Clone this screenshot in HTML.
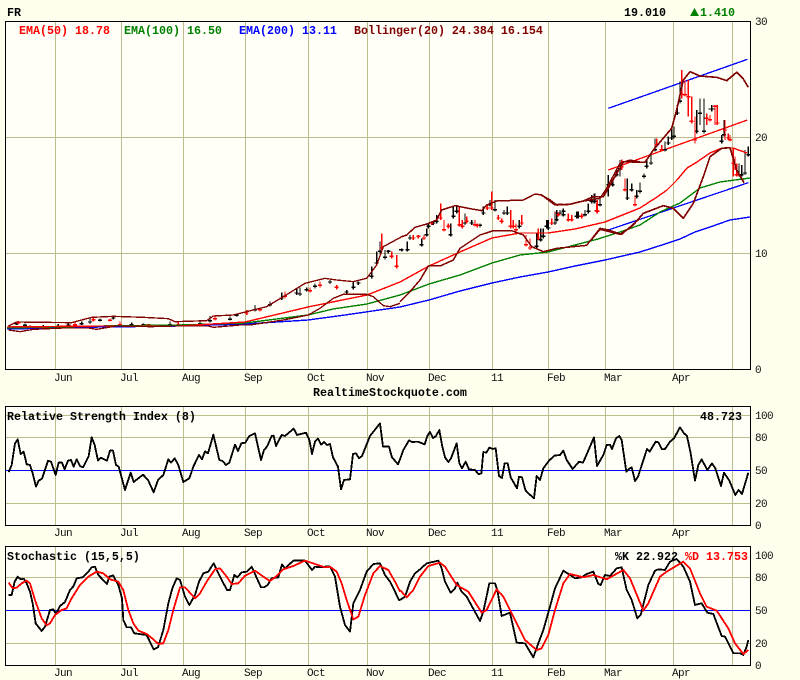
<!DOCTYPE html>
<html><head><meta charset="utf-8"><title>FR</title>
<style>
html,body{margin:0;padding:0;background:#ffffee;width:800px;height:680px;overflow:hidden}
svg{display:block}
text{font-family:"Liberation Mono",monospace;font-size:11px;letter-spacing:-.6px;fill:#111}
.b{font-weight:bold;font-size:11.67px;letter-spacing:0;fill:#000}
.l{fill:none;stroke-linejoin:round;shape-rendering:crispEdges}
</style></head><body>
<svg width="800" height="680" viewBox="0 0 800 680" xmlns="http://www.w3.org/2000/svg">
<rect width="800" height="680" fill="#ffffee"/>
<rect x="5.5" y="21.5" width="745" height="348" fill="#fffff8"/>
<rect x="5.5" y="406.5" width="745" height="119" fill="#fffff8"/>
<rect x="5.5" y="546.5" width="745" height="119" fill="#fffff8"/>
<g stroke="#bcbc8c" stroke-width="1" shape-rendering="crispEdges">
<path d="M55.500 21V369M121.500 21V369M183.500 21V369M245.500 21V369M308.500 21V369M367.500 21V369M429.500 21V369M492.500 21V369M548.500 21V369M605.500 21V369M673.500 21V369M732.500 21V369M5 137.500H750M5 253.500H750"/>
<path d="M55.500 406V525M121.500 406V525M183.500 406V525M245.500 406V525M308.500 406V525M367.500 406V525M429.500 406V525M492.500 406V525M548.500 406V525M605.500 406V525M673.500 406V525M732.500 406V525M5 415.500H750M5 437.500H750M5 503.500H750"/>
<path d="M55.500 546V665M121.500 546V665M183.500 546V665M245.500 546V665M308.500 546V665M367.500 546V665M429.500 546V665M492.500 546V665M548.500 546V665M605.500 546V665M673.500 546V665M732.500 546V665M5 577.500H750M5 643.500H750"/>
</g>

<!-- Trend channel -->
<g transform="translate(540 0) scale(.33333)" class="l" stroke-width="4">
<path d="M205 325L622 178M205 690L625 548" stroke="#0000ff"/>
<path d="M205 510L622 360" stroke="#ff0000"/>
</g>

<!-- Bars left -->
<g transform="translate(0 200) scale(.33333)" class="l" stroke-width="4">
<path stroke="#000" d="M30 378V385m-6-4h12M50 365V375m-6-4h12M75 370V380m-6-4h12M115 378V385m-6-4h12M130 375V385m-6-4h12M175 372V382m-6-4h12M205 370V380m-6-4h12M245 365V375m-6-4h12M270 352V372m-6-6h12M300 355V365m-6-4h12M340 350V358m-6-4h12M395 368V378m-6-4h12M430 370V378m-6-4h12M510 365V378m-6-4h12M600 365V375m-6-4h12M630 348V368m-6-6h12M690 350V362m-6-4h12M710 340V350m-6-4h12M765 315V335m-6-6h12M810 305V320m-6-6h12M845 278V300m-6-6h12M890 265V285m-6-6h12M900 262V288m-6-6h12M920 262V275m-6-6h12M945 250V265m-6-6h12M990 240V252m-6-6h12M1040 270V282m-6-6h12M1060 245V268m-6-6h12M1075 245V255m-6-6h12M1115 200V235m-6-6h12M1130 155V195m-6-6h12M1140 125V160m-6-6h12M1155 150V178m-6-6h12M1165 150V160m-6-6h12"/>
<path stroke="#f00" d="M55 363V372m-6-4h12M90 375V385m-6-4h12M150 378V385m-6-4h12M225 368V378m-6-4h12M280 350V365m-6-6h12M330 355V365m-6-4h12M360 365V378m-6-4h12M445 372V378m-6-4h12M535 365V378m-6-4h12M645 345V362m-6-6h12M740 330V345m-6-6h12M780 322V335m-6-6h12M855 275V295m-6-6h12M930 262V278m-6-6h12M960 245V262m-6-6h12M1010 255V268m-6-6h12M1145 100V150m-6-6h12M1175 155V175m-6-6h12M1190 165V205m-6-6h12"/>
</g>
<!-- Bars mid -->
<g transform="translate(400 140) scale(.33333)" class="l" stroke-width="4">
<path stroke="#000" d="M5 325V335m-8-6h14M22 305V335m-6-6h12M30 285V300m-6-6h12M65 295V320m-6-6h12M80 265V290m-6-6h12M85 250V265m-6-6h12M100 245V255m-6-6h12M110 225V250m-6-6h12M160 200V235m-6-6h12M170 195V220m-6-6h12M195 220V255m-6-6h12M152 250V290m-6-6h12M215 240V255m-6-6h12M240 250V262m-6-6h12M250 200V225m-6-6h12M270 180V200m-6-6h12M285 180V215m-6-6h12M312 210V225m-6-6h12M322 200V225m-6-6h12M358 240V265m-6-6h12M410 280V325m-6-6h12M422 265V305m-6-6h12M430 265V285m-6-6h12M440 240V265m-6-6h12M465 215V255m-6-6h12M480 210V225m-6-6h12M490 205V220m-6-6h12M530 215V235m-6-6h12M545 225V235m-6-6h12M555 210V230m-6-6h12M565 190V220m-6-6h12M575 165V190m-6-6h12M582 160V190m-6-6h12M600 170V200m-6-6h12"/>
<path stroke="#f00" d="M40 285V300m-6-6h12M55 285V295m-6-6h12M72 285V300m-6-6h12M95 245V255m-6-6h12M122 190V240m-6-6h12M132 240V275m-6-6h12M145 250V265m-6-6h12M178 198V260m-6-6h12M187 240V265m-6-6h12M200 230V250m-6-6h12M225 240V260m-6-6h12M232 250V262m-6-6h12M262 195V210m-6-6h12M275 155V210m-6-6h12M295 225V240m-6-6h12M305 235V250m-6-6h12M332 210V265m-6-6h12M340 240V265m-6-6h12M348 250V275m-6-6h12M365 225V255m-6-6h12M378 285V320m-6-6h12M390 295V330m-6-6h12M415 265V300m-6-6h12M455 235V255m-6-6h12M470 210V225m-6-6h12M505 220V245m-6-6h12M515 225V245m-6-6h12M590 190V218m-6-6h12"/>
</g>
<!-- Bars right -->
<g transform="translate(540 0) scale(.33333)" class="l" stroke-width="4">
<path stroke="#000" d="M10 685V715m-6-6h12M25 660V690m-6-6h12M50 630V665m-6-6h12M70 625V650m-6-6h12M115 635V655m-6-6h12M135 630V650m-6-6h12M145 612V640m-6-6h12M155 590V610m-6-6h12M165 580V610m-6-6h12M180 595V620m-6-6h12M205 525V590m-6-36h12M218 540V560m-6-6h12M230 505V530m-6-6h12M240 480V530m-6-24h12M262 535V600m-6-6h12M275 550V575m-6-6h12M290 570V595m-6-6h12M300 548V580m-6-6h12M312 520V535m-6-6h12M320 480V505m-6-6h12M333 460V495m-6-6h12M345 415V455m-6-6h12M375 425V455m-6-6h12M385 410V435m-6-6h12M395 385V420m-6-6h12M402 380V415m-6-6h12M412 315V345m-6-6h12M420 245V310m-6-6h12M470 330V400m-6-6h12M480 295V375m-6-35h12M492 295V400m-6-6h12M515 315V335m-9-8h18M545 405V430m-6-6h12M552 360V410m-6-6h12M597 490V530m-6-6h12M605 495V530m-6-6h12M615 450V525m-6-6h12M625 440V470m-6-6h12"/>
<path stroke="#f00" d="M35 660V675m-6-6h12M55 640V650m-6-6h12M85 645V665m-6-6h12M95 650V665m-6-6h12M125 640V655m-6-6h12M172 600V640m-6-6h12M245 478V510m-6-10h12M255 535V575m-6-6h12M285 590V620m-6-6h12M350 415V440m-6-6h12M365 435V455m-6-6h12M425 210V295m-6-12h12M435 240V290m-6-6h12M445 240V350m-6-60h12M455 290V370m-6-6h12M465 350V430m-6-10h12M500 340V375m-6-20h12M510 345V365m-6-6h12M525 315V375m-6-56h12M532 315V375m-6-6h12M555 360V420m-6-30h12M565 400V420m-6-6h12M570 405V425m-6-6h12M580 445V530m-6-40h12M585 470V510m-6-6h12M590 490V530m-6-6h12"/>
</g>

<!-- Main indicators -->
<g class="l" stroke-width="1.400">
<polyline stroke="#0000ff" points="7,329 100,327 180,326 245,324 308,320 345,315 400,307 429,300 460,291 492,283 520,277 548,272 575,266 605,260 640,252 665,244 680,239 695,232 710,227 730,220 750,217"/>
<polyline stroke="#008000" points="7,328 100,326 180,325 245,323 308,315 333,309 367,304 400,295 429,284 460,275 492,263 520,255 548,252 575,245 598,239 620,232 640,225 660,212 680,203 700,188 720,182 750,178"/>
<polyline stroke="#ff0000" points="7,327 100,326 180,326 245,322 308,307 367,295 400,282 429,266 460,252 492,238 520,233 548,233 575,229 605,222 640,208 657,197 667,190 677,180 687,168 697,162 710,153 722,148 733,148 747,153"/>
</g>
<g transform="translate(0 200) scale(.33333)" class="l" stroke="#800000" stroke-width="4">
<polyline points="25,378 50,366 215,368 275,352 340,349 430,352 505,356 525,365 620,362 640,348 700,345 800,320 850,290 915,250 975,235 1010,240 1060,245 1100,235 1130,195 1150,140 1200,113"/>
<polyline points="25,390 60,395 100,388 190,384 265,384 290,388 350,378 455,380 520,378 625,378 640,382 720,375 750,375 850,360 925,345 960,325 1000,295 1030,283 1100,283 1120,290 1150,317 1170,320 1200,310"/>
</g>
<g transform="translate(400 140) scale(.33333)" class="l" stroke="#800000" stroke-width="4.500">
<polyline points="0,292 20,285 45,262 80,252 110,240 125,210 165,197 205,205 245,212 260,195 290,183 370,180 405,162 425,165 465,195 480,192 500,195 540,185 570,180 600,175 620,145 660,70 690,60 720,66"/>
<polyline points="0,485 30,455 60,420 85,378 120,378 160,360 180,325 240,285 280,272 335,272 370,285 395,320 430,335 470,325 560,316 600,265 625,270 665,283 720,235"/>
</g>
<g transform="translate(540 0) scale(.33333)" class="l" stroke="#800000" stroke-width="5">
<polyline points="0,583 30,600 50,615 90,613 130,603 160,590 190,590 225,530 250,485 315,487 340,450 395,385 410,330 430,240 450,215 480,228 530,232 560,242 590,217 610,237 625,262"/>
<polyline points="155,718 180,688 240,703 275,680 310,640 370,617 400,625 430,655 460,610 490,530 510,470 545,445 570,443 590,510 612,548"/>
</g>

<!-- RSI -->
<path d="M5 470.500H750" stroke="#0000ff" stroke-width="1" shape-rendering="crispEdges"/>
<g transform="translate(0 350) scale(.33333)" class="l" stroke="#000" stroke-width="5.500">
<polyline points="26,366 35,345 45,280 53,268 62,312 71,305 80,343 90,345 98,370 108,410 116,392 126,386 144,332 153,335 167,375 176,338 186,338 194,358 204,332 213,330 221,350 230,328 240,348 249,352 266,318 275,262 284,285 294,332 303,323 321,332 330,302 339,302 348,345 356,350 375,420 392,368 401,396 429,374 444,390 461,427 474,390 490,375 505,328 513,338 524,325 535,345 550,396 568,385 580,350 597,315 606,328 615,304 624,310 640,254 658,330 668,333 678,345 688,338 705,284 714,303 724,280 736,278 748,258 765,250 783,330 792,300 801,290 815,258 821,257 828,288 845,255 855,258 881,236 891,255 918,248 928,270 936,312 945,275 954,266 963,284 972,276 981,285 990,282 999,322 1014,350 1023,418 1032,390 1050,388 1059,312 1068,310 1077,325 1086,318 1110,258 1140,220 1149,290 1167,290 1176,322 1194,343 1200,328"/>
</g>
<g transform="translate(400 350) scale(.33333)" class="l" stroke="#000" stroke-width="5.500">
<polyline points="0,328 10,300 27,271 36,276 54,275 74,283 82,258 90,246 99,264 108,258 118,240 126,285 135,322 145,336 153,325 170,280 178,340 186,355 197,335 207,358 225,360 236,373 244,370 250,306 259,308 268,293 279,297 287,295 297,378 306,384 314,340 323,340 332,382 351,415 357,380 366,382 376,420 385,430 402,445 410,378 420,390 430,355 447,332 463,317 480,315 490,302 500,330 518,357 537,335 549,338 558,318 582,262 591,348 610,315 620,285 630,284 636,297 648,265 658,258 665,270 679,365 688,356 695,352 705,393 714,380 741,297 749,305 767,275 775,277 786,298 795,297 810,275 822,265 840,232 852,250 861,258 872,310 885,392 895,345 905,328 922,360 936,340 946,355 963,408 972,368 988,392 1006,435 1016,420 1026,432 1045,368"/>
</g>

<!-- Stochastic -->
<path d="M5 610.500H750" stroke="#0000ff" stroke-width="1" shape-rendering="crispEdges"/>
<g transform="translate(0 540) scale(.33333)" class="l" stroke-width="5.500">
<polyline stroke="#000" points="26,165 35,165 44,125 53,110 62,118 71,116 80,130 90,155 98,190 107,250 125,273 135,260 150,210 160,208 168,222 180,198 195,186 210,150 221,138 230,115 248,112 265,95 275,82 285,80 295,105 321,132 328,110 339,106 355,135 366,175 370,240 380,262 393,262 403,280 425,283 440,285 461,328 474,322 490,270 505,190 517,145 530,115 540,120 555,170 568,195 585,165 597,125 610,100 625,95 641,70 660,110 681,150 690,150 703,105 712,112 725,97 740,95 755,80 783,142 792,142 803,135 815,115 835,112 846,73 855,85 880,62 915,62 936,90 945,80 960,82 975,80 990,80 1005,110 1020,200 1035,255 1050,275 1060,190 1080,150 1100,95 1120,72 1140,70 1155,105 1170,125 1185,155 1197,180 1200,180"/>
<polyline stroke="#f00" points="26,128 38,145 50,143 65,130 80,122 90,130 105,180 125,235 140,256 150,250 165,225 185,210 200,205 215,175 240,135 265,110 290,95 310,100 330,118 355,125 370,150 385,210 400,250 415,272 440,282 460,298 475,312 490,310 505,270 520,210 540,142 555,142 585,175 600,160 620,125 645,88 660,85 680,110 695,132 715,130 735,107 765,92 790,110 810,123 825,112 850,88 880,78 915,62 945,72 975,82 990,80 1010,95 1025,130 1040,180 1060,238 1075,230 1095,165 1120,100 1140,78 1165,90 1185,125 1200,155"/>
</g>
<g transform="translate(400 540) scale(.33333)" class="l" stroke-width="5.500">
<polyline stroke="#000" points="0,180 15,170 30,125 45,100 60,88 80,70 115,62 125,85 135,125 152,158 165,145 172,128 185,155 200,170 240,243 250,215 268,130 285,130 292,150 305,228 330,218 350,308 375,310 400,352 415,310 430,270 450,200 465,145 490,92 515,108 525,115 545,112 560,102 580,95 595,132 602,135 615,105 630,108 650,85 665,82 680,150 695,180 712,235 722,225 745,135 765,92 775,88 795,90 810,65 830,57 850,80 870,125 885,195 905,190 922,218 940,222 965,288 975,290 1000,340 1020,340 1030,345 1040,320 1045,300"/>
<polyline stroke="#f00" points="0,150 20,172 40,150 60,110 85,78 120,68 135,80 170,135 205,155 245,218 260,210 290,148 310,170 350,250 375,300 410,330 425,325 445,285 465,210 490,130 510,102 550,112 580,105 620,118 670,90 690,115 730,212 745,190 780,110 800,95 850,65 870,85 900,160 920,200 950,212 985,265 1005,310 1030,342 1045,330"/>
</g>

<!-- Frames -->
<g fill="none" stroke="#000" stroke-width="1" shape-rendering="crispEdges">
<rect x="5.500" y="21.500" width="745" height="348"/>
<rect x="5.500" y="406.500" width="745" height="119"/>
<rect x="5.500" y="546.500" width="745" height="119"/>
</g>

<!-- Text -->
<text class="b" x="7" y="16">FR</text>
<text class="b" x="624" y="16">19.010</text>
<path d="M690 16L694.500 8L699 16Z" fill="#008000"/>
<text class="b" x="700" y="16" style="fill:#008000">1.410</text>
<text class="b" x="19" y="34" style="fill:#ff0000">EMA(50) 18.78</text>
<text class="b" x="124" y="34" style="fill:#008000">EMA(100) 16.50</text>
<text class="b" x="239" y="34" style="fill:#0000ff">EMA(200) 13.11</text>
<text class="b" x="354" y="34" style="fill:#800000">Bollinger(20) 24.384 16.154</text>
<text class="b" x="313" y="396">RealtimeStockquote.com</text>
<text class="b" x="7" y="420">Relative Strength Index (8)</text>
<text class="b" x="700" y="420">48.723</text>
<text class="b" x="7" y="560">Stochastic (15,5,5)</text>
<text class="b" x="615" y="560">%K 22.922</text>
<text class="b" x="685" y="560" style="fill:#ff0000">%D 13.753</text>

<text x="755" y="25">30</text><text x="755" y="141">20</text><text x="755" y="257">10</text><text x="755" y="373">0</text>
<text x="755" y="419">100</text><text x="755" y="441">80</text><text x="755" y="474">50</text><text x="755" y="507">20</text><text x="755" y="529">0</text>
<text x="755" y="559">100</text><text x="755" y="581">80</text><text x="755" y="614">50</text><text x="755" y="647">20</text><text x="755" y="669">0</text>

<text x="54" y="381">Jun</text><text x="120" y="381">Jul</text><text x="182" y="381">Aug</text><text x="244" y="381">Sep</text><text x="307" y="381">Oct</text><text x="366" y="381">Nov</text><text x="428" y="381">Dec</text><text x="491" y="381">11</text><text x="547" y="381">Feb</text><text x="604" y="381">Mar</text><text x="672" y="381">Apr</text>
<text x="54" y="536">Jun</text><text x="120" y="536">Jul</text><text x="182" y="536">Aug</text><text x="244" y="536">Sep</text><text x="307" y="536">Oct</text><text x="366" y="536">Nov</text><text x="428" y="536">Dec</text><text x="491" y="536">11</text><text x="547" y="536">Feb</text><text x="604" y="536">Mar</text><text x="672" y="536">Apr</text>
<text x="54" y="676">Jun</text><text x="120" y="676">Jul</text><text x="182" y="676">Aug</text><text x="244" y="676">Sep</text><text x="307" y="676">Oct</text><text x="366" y="676">Nov</text><text x="428" y="676">Dec</text><text x="491" y="676">11</text><text x="547" y="676">Feb</text><text x="604" y="676">Mar</text><text x="672" y="676">Apr</text>
</svg>
</body></html>
